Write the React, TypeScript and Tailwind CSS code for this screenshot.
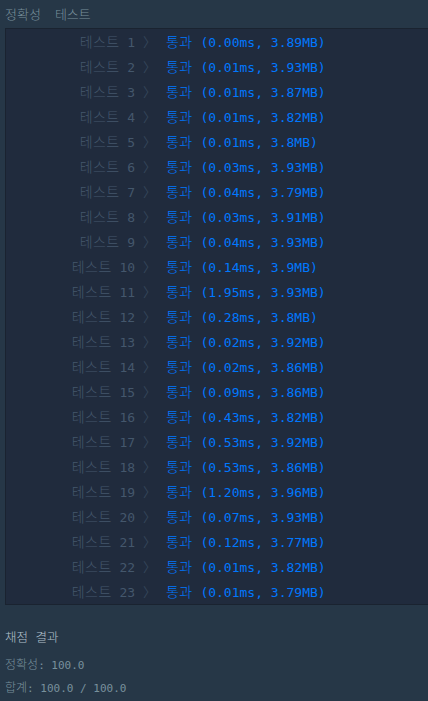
import React from "react";

const rows: [string, string][] = [
  ["1", "(0.00ms, 3.89MB)"],
  ["2", "(0.01ms, 3.93MB)"],
  ["3", "(0.01ms, 3.87MB)"],
  ["4", "(0.01ms, 3.82MB)"],
  ["5", "(0.01ms, 3.8MB)"],
  ["6", "(0.03ms, 3.93MB)"],
  ["7", "(0.04ms, 3.79MB)"],
  ["8", "(0.03ms, 3.91MB)"],
  ["9", "(0.04ms, 3.93MB)"],
  ["10", "(0.14ms, 3.9MB)"],
  ["11", "(1.95ms, 3.93MB)"],
  ["12", "(0.28ms, 3.8MB)"],
  ["13", "(0.02ms, 3.92MB)"],
  ["14", "(0.02ms, 3.86MB)"],
  ["15", "(0.09ms, 3.86MB)"],
  ["16", "(0.43ms, 3.82MB)"],
  ["17", "(0.53ms, 3.92MB)"],
  ["18", "(0.53ms, 3.86MB)"],
  ["19", "(1.20ms, 3.96MB)"],
  ["20", "(0.07ms, 3.93MB)"],
  ["21", "(0.12ms, 3.77MB)"],
  ["22", "(0.01ms, 3.82MB)"],
  ["23", "(0.01ms, 3.79MB)"],
];

function K({ children }: { children: React.ReactNode }) {
  return <span className="text-[14px] tracking-[0.4px] font-light">{children}</span>;
}

export default function App() {
  return (
    <div
      className="w-[428px] h-[701px] bg-[#263747] overflow-hidden text-[13px] whitespace-pre"
      style={{ fontFamily: '"DejaVu Sans Mono", "Noto Sans CJK KR", monospace' }}
    >
      <div className="h-[28px] pl-[5px] flex items-center gap-[14px] text-[#78909c] leading-none font-light">
        <span>정확성</span>
        <span>테스트</span>
      </div>
      <div className="ml-[5px] border-l border-t border-b border-[#1a2330] bg-[#202b3d] flex flex-col">
        {rows.map(([n, r]) => (
          <div key={n} className="h-[25px] flex items-center leading-none">
            <div className="w-[150px] text-right text-[#44576c]">
              <K>테스트</K> {n} <span className="text-[#34455a]">〉</span>
            </div>
            <div className="ml-[10px] text-[#0078ff]">
              <K>통과</K> {r}
            </div>
          </div>
        ))}
      </div>
      <div className="pl-[5px] pt-[25px] leading-none">
        <div className="h-[16px] flex items-center text-[#b2c0cc] text-[12.5px] font-light">
          <span>채점 결과</span>
        </div>
        <div className="mt-[11px] h-[16px] flex items-center text-[#78909c] text-[11px]">
          <span>
            <span className="font-light text-[12px]">정확성</span>: 100.0
          </span>
        </div>
        <div className="mt-[7px] h-[16px] flex items-center text-[#78909c] text-[11px]">
          <span>
            <span className="font-light text-[12px]">합계</span>: 100.0 / 100.0
          </span>
        </div>
      </div>
    </div>
  );
}
